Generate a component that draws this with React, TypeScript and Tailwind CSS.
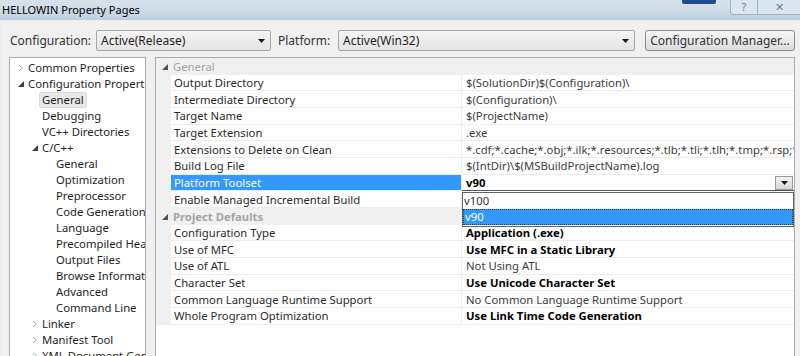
const TREE = [
  { label: "Common Properties", level: 0, icon: "closed" },
  { label: "Configuration Properties", level: 0, icon: "open" },
  { label: "General", level: 1, selected: true },
  { label: "Debugging", level: 1 },
  { label: "VC++ Directories", level: 1 },
  { label: "C/C++", level: 1, icon: "open" },
  { label: "General", level: 2 },
  { label: "Optimization", level: 2 },
  { label: "Preprocessor", level: 2 },
  { label: "Code Generation", level: 2 },
  { label: "Language", level: 2 },
  { label: "Precompiled Headers", level: 2 },
  { label: "Output Files", level: 2 },
  { label: "Browse Information", level: 2 },
  { label: "Advanced", level: 2 },
  { label: "Command Line", level: 2 },
  { label: "Linker", level: 1, icon: "closed" },
  { label: "Manifest Tool", level: 1, icon: "closed" },
  { label: "XML Document Generator", level: 1, icon: "closed" },
];

type Row =
  | { kind: "cat"; label: string }
  | { kind: "prop"; name: string; value: string; bold?: boolean; selected?: boolean };

const GRID: Row[] = [
  { kind: "cat", label: "General" },
  { kind: "prop", name: "Output Directory", value: "$(SolutionDir)$(Configuration)\\" },
  { kind: "prop", name: "Intermediate Directory", value: "$(Configuration)\\" },
  { kind: "prop", name: "Target Name", value: "$(ProjectName)" },
  { kind: "prop", name: "Target Extension", value: ".exe" },
  {
    kind: "prop",
    name: "Extensions to Delete on Clean",
    value: "*.cdf;*.cache;*.obj;*.ilk;*.resources;*.tlb;*.tli;*.tlh;*.tmp;*.rsp;*.pgc;*.pgd;*.meta",
  },
  { kind: "prop", name: "Build Log File", value: "$(IntDir)\\$(MSBuildProjectName).log" },
  { kind: "prop", name: "Platform Toolset", value: "v90", bold: true, selected: true },
  // value hidden behind the open list
  { kind: "prop", name: "Enable Managed Incremental Build", value: "" },
  { kind: "cat", label: "Project Defaults" },
  { kind: "prop", name: "Configuration Type", value: "Application (.exe)", bold: true },
  { kind: "prop", name: "Use of MFC", value: "Use MFC in a Static Library", bold: true },
  { kind: "prop", name: "Use of ATL", value: "Not Using ATL" },
  { kind: "prop", name: "Character Set", value: "Use Unicode Character Set", bold: true },
  { kind: "prop", name: "Common Language Runtime Support", value: "No Common Language Runtime Support" },
  { kind: "prop", name: "Whole Program Optimization", value: "Use Link Time Code Generation", bold: true },
];

function Chevron() {
  return (
    <svg width="6" height="8" viewBox="0 0 6 8" className="shrink-0">
      <path d="M1 1 L4.5 4 L1 7" fill="none" stroke="#a6a6a6" strokeWidth="1" />
    </svg>
  );
}

function Expanded({ color = "#404040" }: { color?: string }) {
  return (
    <svg width="6" height="6" viewBox="0 0 6 6" className="shrink-0">
      <path d="M6 0 L6 6 L0 6 Z" fill={color} />
    </svg>
  );
}

function ComboArrow() {
  return (
    <svg width="7" height="4" viewBox="0 0 7 4">
      <path d="M0 0 L7 0 L3.5 4 Z" fill="#1a1a1a" />
    </svg>
  );
}

function Combo({ width, text }: { width: string; text: string }) {
  return (
    <div
      className={`${width} h-[21px] flex items-center justify-between pl-[4px] pr-[5px] border border-[#a7a7a7] rounded-[2px] bg-gradient-to-b from-[#f4f4f4] to-[#e4e4e4] text-[#1e1e1e]`}
    >
      <span>{text}</span>
      <ComboArrow />
    </div>
  );
}

export default function App() {
  return (
    <div
      className="w-[800px] h-[356px] overflow-hidden flex flex-col text-[12px] text-[#1e1e1e] bg-[#f0f0f0]"
      style={{ fontFamily: '"Noto Sans", "Open Sans", sans-serif' }}
    >
      {/* TITLE BAR */}
      <div className="h-[20px] shrink-0 flex items-start bg-gradient-to-b from-[#d7e1ea] via-[#cfdbe7] to-[#bfcfdd]">
        <div className="pl-[2px] pt-[2px] text-[11px] leading-[15px] text-black">
          HELLOWIN Property Pages
        </div>
        <div className="ml-auto flex items-start">
          <div className="w-[34px] h-[4px] mr-[14px] bg-[#1d4f8c] rounded-b-[2px]" />
          <div className="w-[28px] h-[15px] border-l border-r border-b border-[#9fb0c2] rounded-bl-[3px] bg-[#dbe5ee] flex items-center justify-center text-[11px] leading-[12px] text-[#6b7c8e]">
            ?
          </div>
          <div className="w-[42px] h-[15px] border-b border-[#9fb0c2] bg-[#dbe5ee] flex items-center justify-center text-[11px] leading-[12px] text-[#6b7c8e]">
            ✕
          </div>
        </div>
      </div>

      {/* BODY */}
      <div className="flex-1 flex flex-col border-t border-l-2 border-[#e9eef3] bg-[#f0f0f0]">
        {/* CONTROLS */}
        <div className="h-[21px] mt-[9px] flex items-center">
          <span className="ml-[8px] w-[86px] text-[#333]">Configuration:</span>
          <Combo width="w-[175px]" text="Active(Release)" />
          <span className="ml-[7px] w-[60px] text-[#333]">Platform:</span>
          <Combo width="w-[297px]" text="Active(Win32)" />
          <button className="ml-[10px] w-[150px] h-[21px] border border-[#8a8a8a] rounded-[3px] bg-gradient-to-b from-[#f6f6f6] to-[#dcdcdc] text-[#333]">
            Configuration Manager...
          </button>
        </div>

        {/* PANELS */}
        <div className="flex-1 flex mt-[6px] min-h-0 text-[11.3px]">
          {/* TREE */}
          <div className="ml-[7px] w-[137px] border border-[#a9adb3] bg-white pt-[2px] overflow-hidden">
            {TREE.map((item, i) => (
              <div
                key={i}
                className={`h-[16px] flex items-center whitespace-nowrap ${
                  item.level === 0 ? "pl-[4px]" : item.level === 1 ? "pl-[18px]" : "pl-[32px]"
                }`}
              >
                <div className="w-[14px] shrink-0 flex items-center justify-center pr-[1px]">
                  {item.icon === "closed" && <Chevron />}
                  {item.icon === "open" && <Expanded />}
                </div>
                <span
                  className={
                    item.selected
                      ? "-ml-[3px] px-[2px] h-[16px] leading-[14px] bg-[#e8e8e8] border border-[#d9d9d9] rounded-[2px]"
                      : "leading-[16px]"
                  }
                >
                  {item.label}
                </span>
              </div>
            ))}
          </div>

          {/* PROPERTY GRID */}
          <div className="ml-[9px] w-[640px] border border-[#a9adb3] bg-white overflow-hidden relative">
            {GRID.map((row, i) =>
              row.kind === "cat" ? (
                <div key={i} className="h-[16.67px] flex items-center bg-[#f0f0f0] pt-[1px]">
                  <div className="w-[17px] flex justify-center pl-[1px]">
                    <Expanded color="#505050" />
                  </div>
                  <span
                    className={`leading-[16px] text-[#a5a5a5] ${row.label === "General" ? "" : "font-bold"}`}
                  >
                    {row.label}
                  </span>
                </div>
              ) : (
                <div key={i} className="h-[16.67px] flex leading-[16px]">
                  <div className="w-[15px] shrink-0 bg-[#f0f0f0]" />
                  <div
                    className={`w-[291px] shrink-0 flex items-center pl-[3px] pt-[1px] border-b border-r border-[#ececec] ${
                      row.selected ? "bg-[#3399ff] text-white border-[#3399ff]" : "text-[#2a2a2a]"
                    }`}
                  >
                    {row.name}
                  </div>
                  <div
                    className={`flex-1 flex items-center pl-[4px] pt-[1px] whitespace-nowrap overflow-hidden border-b border-[#ececec] ${
                      row.bold ? "font-bold text-black" : "text-[#3c3c3c]"
                    } ${row.selected ? "border-b-[#555] pr-[1px]" : ""}`}
                  >
                    <span className="flex-1">{row.value}</span>
                    {row.selected && (
                      <div className="w-[18px] h-[14px] border border-[#9a9a9a] bg-gradient-to-b from-[#f2f2f2] to-[#d9d9d9] flex items-center justify-center">
                        <ComboArrow />
                      </div>
                    )}
                  </div>
                </div>
              ),
            )}

            {/* DROPDOWN LIST */}
            <div className="absolute left-[306px] top-[134px] w-[332px] h-[35px] border border-[#646464] bg-white">
              <div className="h-[16px] flex items-center pl-[1px] text-[#333]">v100</div>
              <div className="h-[16px] flex items-center pl-[1px] bg-[#3399ff] text-white border border-dotted border-[#1a3f6b]">
                v90
              </div>
            </div>
          </div>
        </div>
      </div>
    </div>
  );
}
